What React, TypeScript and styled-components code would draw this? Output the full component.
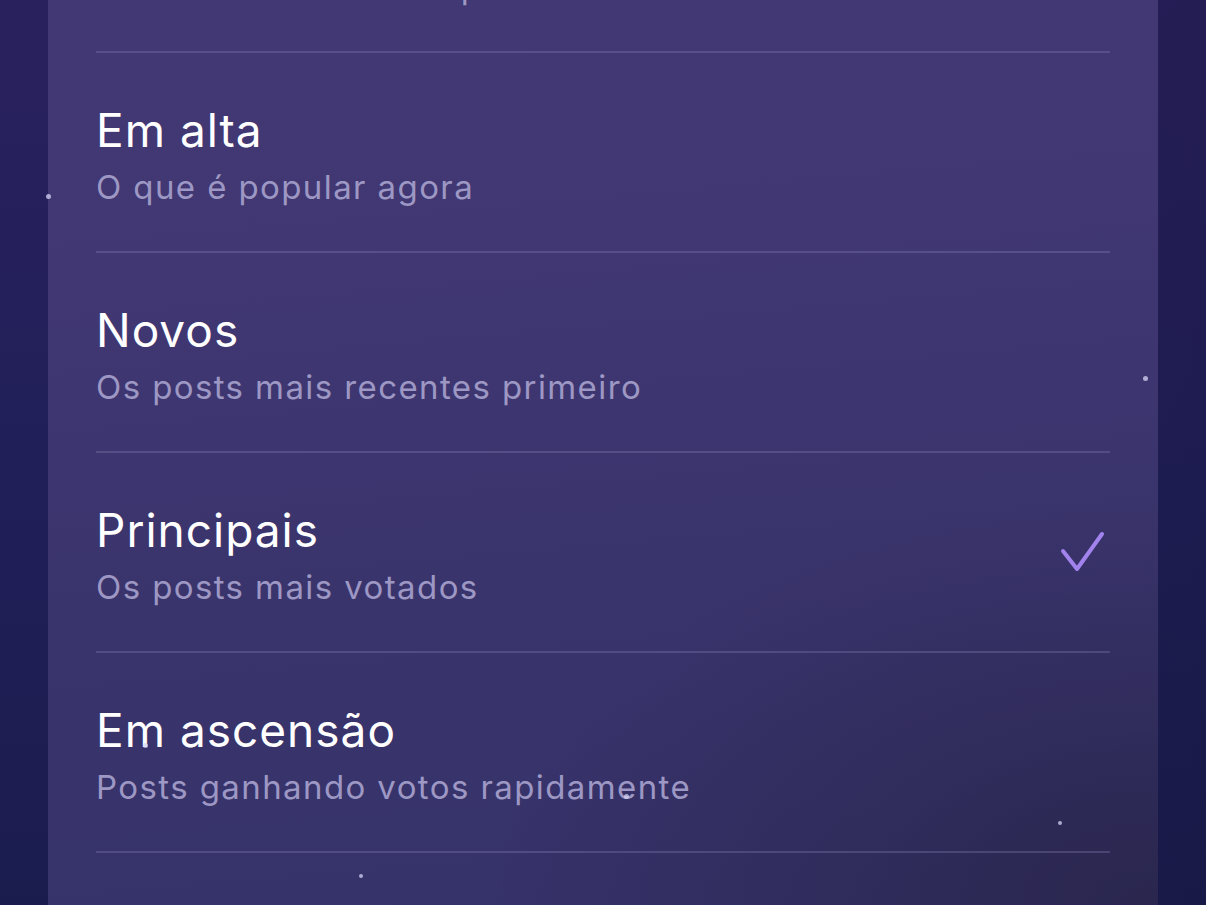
import React from 'react';
import styled, { createGlobalStyle } from 'styled-components';

type SortOption = {
  id: string;
  title: string;
  hint: string;
};

const options: SortOption[] = [
  { id: 'best', title: 'Melhores', hint: 'Posts recomendados para você' },
  { id: 'hot', title: 'Em alta', hint: 'O que é popular agora' },
  { id: 'new', title: 'Novos', hint: 'Os posts mais recentes primeiro' },
  { id: 'top', title: 'Principais', hint: 'Os posts mais votados' },
  { id: 'rising', title: 'Em ascensão', hint: 'Posts ganhando votos rapidamente' },
];

const specks = [
  { x: 46, y: 194, size: 5 },
  { x: 1143, y: 376, size: 5 },
  { x: 143, y: 743, size: 5 },
  { x: 624, y: 794, size: 5 },
  { x: 1058, y: 821, size: 4 },
  { x: 359, y: 874, size: 4 },
];

const GlobalStyle = createGlobalStyle`
  html, body {
    margin: 0;
    padding: 0;
    height: 100%;
    overflow: hidden;
  }

  body {
    font-family: Inter, 'Noto Sans', sans-serif;
    -webkit-font-smoothing: antialiased;
  }
`;

const Screen = styled.div`
  position: relative;
  width: 1206px;
  height: 905px;
  overflow: hidden;
  display: flex;
  justify-content: center;
  background:
    linear-gradient(90deg, rgba(0, 0, 0, 0) 60%, rgba(10, 8, 30, 0.15) 100%),
    linear-gradient(180deg, #29215e 0%, #201f58 55%, #1b1c4e 100%);
`;

const Sheet = styled.div`
  width: 1110px;
  height: 100%;
  padding: 0 48px;
  box-sizing: border-box;
  overflow: hidden;
  background:
    radial-gradient(ellipse 60% 45% at 100% 100%, rgba(30, 26, 50, 0.5) 0%, rgba(30, 26, 50, 0) 100%),
    linear-gradient(175deg, #423874 0%, #403773 30%, #3a346c 60%, #35326a 100%);
`;

const List = styled.ul`
  list-style: none;
  margin: -147px 0 0;
  padding: 0;
`;

const Row = styled.li`
  height: 200px;
  box-sizing: border-box;
  border-bottom: 2px solid rgba(150, 145, 195, 0.28);
  display: flex;
  align-items: center;
  justify-content: space-between;
`;

const Texts = styled.div`
  display: flex;
  flex-direction: column;
  align-self: flex-start;
  padding-top: 50px;
`;

const Title = styled.div`
  font-size: 46px;
  line-height: 54px;
  color: #ffffff;
  letter-spacing: 1px;
`;

const Hint = styled.div`
  margin-top: 10px;
  font-size: 33px;
  line-height: 40px;
  color: #9d97c4;
  letter-spacing: 1.4px;
`;

const Check = styled.svg`
  width: 46px;
  height: 46px;
  margin-right: 4px;
  flex-shrink: 0;
`;

const Speck = styled.span`
  position: absolute;
  border-radius: 50%;
  background: rgba(215, 215, 245, 0.75);
`;

const CheckMark = () => (
  <Check viewBox="0 0 46 46" fill="none">
    <path
      d="M3 22 L17 40 L42 5"
      stroke="#a283ee"
      strokeWidth="4"
      strokeLinecap="round"
      strokeLinejoin="round"
    />
  </Check>
);

export default function App() {
  const selected = 'top';

  return (
    <>
      <GlobalStyle />
      <Screen>
        <Sheet>
          <List>
            {options.map((option) => (
              <Row key={option.id}>
                <Texts>
                  <Title>{option.title}</Title>
                  <Hint>{option.hint}</Hint>
                </Texts>
                {option.id === selected && <CheckMark />}
              </Row>
            ))}
          </List>
        </Sheet>
        {specks.map((s, i) => (
          <Speck key={i} style={{ left: s.x, top: s.y, width: s.size, height: s.size }} />
        ))}
      </Screen>
    </>
  );
}
